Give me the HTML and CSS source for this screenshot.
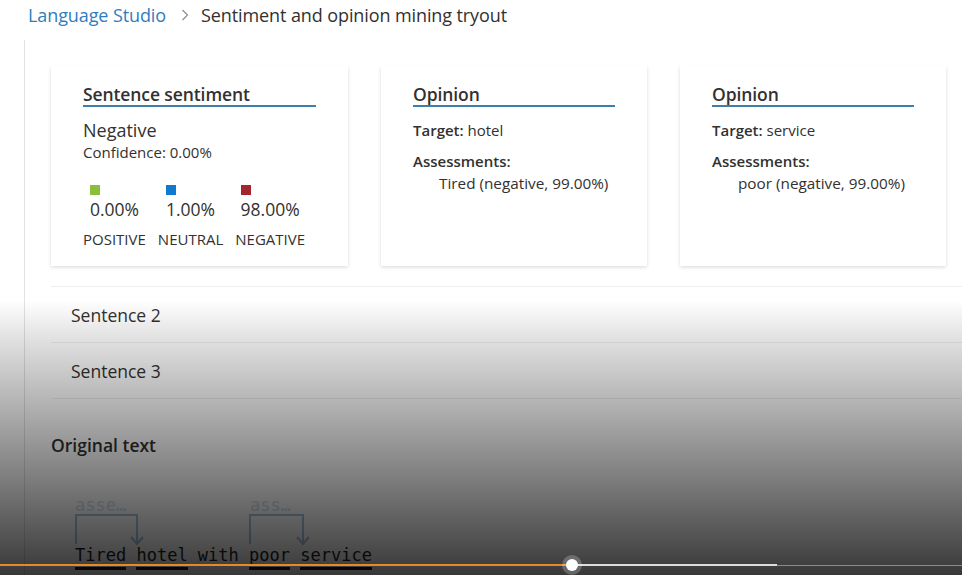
FILE: index.html
```html
<!DOCTYPE html>
<html lang="en">
<head>
<meta charset="utf-8">
<title>Sentiment and opinion mining tryout</title>
<link rel="stylesheet" href="styles.css">
</head>
<body>
<nav class="crumbs">
  <a class="crumb-link">Language Studio</a>
  <svg class="chev" width="8" height="12" viewBox="0 0 8 12"><path d="M1.5 1 L6.5 6 L1.5 11" fill="none" stroke="#8a8886" stroke-width="1.1"/></svg>
  <span class="crumb-current">Sentiment and opinion mining tryout</span>
</nav>

<main class="content">
  <section class="cards">
    <div class="card card-wide">
      <h3 class="card-title">Sentence sentiment</h3>
      <div class="sent-label">Negative</div>
      <div class="confidence">Confidence: 0.00%</div>
      <div class="scores">
        <div class="score">
          <div class="score-top"><span class="swatch pos"></span><span class="pct">0.00%</span></div>
          <span class="lbl">POSITIVE</span>
        </div>
        <div class="score">
          <div class="score-top"><span class="swatch neu"></span><span class="pct">1.00%</span></div>
          <span class="lbl">NEUTRAL</span>
        </div>
        <div class="score">
          <div class="score-top"><span class="swatch neg"></span><span class="pct">98.00%</span></div>
          <span class="lbl">NEGATIVE</span>
        </div>
      </div>
    </div>

    <div class="card">
      <h3 class="card-title">Opinion</h3>
      <div class="target"><b>Target:</b> hotel</div>
      <div class="assess-h">Assessments:</div>
      <div class="assess">Tired (negative, 99.00%)</div>
    </div>

    <div class="card">
      <h3 class="card-title">Opinion</h3>
      <div class="target"><b>Target:</b> service</div>
      <div class="assess-h">Assessments:</div>
      <div class="assess">poor (negative, 99.00%)</div>
    </div>
  </section>

  <div class="rows">
    <div class="row">Sentence 2</div>
    <div class="row">Sentence 3</div>
  </div>

  <h3 class="orig-title">Original text</h3>

  <div class="annot">
    <div class="diagram">
      <span class="tag tag1">asse…</span>
      <span class="tag tag2">ass…</span>
      <svg class="links" width="320" height="60" viewBox="0 0 320 60">
        <g fill="none" stroke="#a9c6e2" stroke-width="2">
          <path d="M1 52 V23 H62 V51"/>
          <path d="M56 45 L62 52 L68 45"/>
          <path d="M175 52 V23 H228 V51"/>
          <path d="M222 45 L228 52 L234 45"/>
        </g>
      </svg>
    </div>
    <div class="sentence"><span class="u">Tired</span> <span class="u">hotel</span> with <span class="u">poor</span> <span class="u">service</span></div>
  </div>
</main>

<div class="shade"></div>
<div class="player">
  <div class="bar-played"></div>
  <div class="knob"></div>
  <div class="bar-buffered"></div>
  <div class="bar-rest"></div>
</div>
</body>
</html>
```

FILE: styles.css
```css
* { box-sizing: border-box; }
html, body { margin: 0; padding: 0; }
body {
  width: 962px;
  height: 575px;
  overflow: hidden;
  background: #ffffff;
  font-family: "Open Sans", "Noto Sans", sans-serif;
  color: #323130;
  position: relative;
}

.crumbs {
  display: flex;
  align-items: center;
  height: 30px;
  padding-left: 28px;
  font-size: 18px;
  letter-spacing: -0.1px;
}
.crumb-link { color: #2f7dbf; }
.chev { margin: 0 12px 0 15px; }
.crumb-current { color: #323130; }

.content {
  margin-left: 24px;
  margin-top: 10px;
  border-left: 1px solid #e4e2e0;
  padding-left: 26px;
  padding-top: 25px;
  min-height: 545px;
}

.cards {
  display: flex;
  gap: 33px;
}
.card {
  width: 266px;
  height: 201px;
  background: #fff;
  padding: 18px 32px 16px;
  box-shadow: 0 1.6px 3.6px rgba(0,0,0,0.14), 0 0.3px 0.9px rgba(0,0,0,0.12);
}
.card-wide { width: 297px; }

.card-title {
  margin: 0;
  font-size: 17.5px;
  line-height: 22px;
  font-weight: 600;
  color: #323130;
  border-bottom: 2px solid #3f7ea8;
  letter-spacing: -0.1px;
}

.sent-label {
  margin-top: 11px;
  font-size: 18px;
  line-height: 24px;
}
.confidence {
  font-size: 15px;
  line-height: 20px;
}

.scores {
  display: flex;
  gap: 12px;
  margin-top: 23px;
}
.score {
  display: flex;
  flex-direction: column;
  align-items: center;
}
.score-top {
  display: flex;
  flex-direction: column;
  align-items: flex-start;
}
.swatch {
  width: 10px;
  height: 10px;
  display: block;
}
.swatch.pos { background: #8cbd3c; }
.swatch.neu { background: #1179d0; }
.swatch.neg { background: #a4262c; }
.pct {
  margin-top: 3px;
  font-size: 17.5px;
  line-height: 22px;
}
.lbl {
  margin-top: 9px;
  font-size: 15px;
  line-height: 20px;
}

.target {
  margin-top: 12px;
  font-size: 15px;
  line-height: 22px;
}
.target b, .assess-h { font-weight: 600; }
.assess-h {
  margin-top: 9px;
  font-size: 15px;
  line-height: 22px;
}
.assess {
  padding-left: 26px;
  font-size: 15.3px;
  line-height: 22px;
}

.rows {
  margin-top: 20px;
  border-top: 1px solid #efeeed;
}
.row {
  height: 56px;
  display: flex;
  align-items: center;
  padding-left: 20px;
  font-size: 17.5px;
  border-bottom: 1px solid #efeeed;
  padding-top: 1px;
}

.orig-title {
  margin: 34px 0 0;
  font-size: 17.5px;
  line-height: 24px;
  font-weight: 600;
}

.annot {
  margin-top: 35px;
  padding-left: 24px;
}
.diagram {
  position: relative;
  height: 53px;
  width: 320px;
}
.tag {
  position: absolute;
  top: 3px;
  font-family: "DejaVu Sans Mono", "Liberation Mono", monospace;
  font-size: 17px;
  line-height: 20px;
  color: #d2dfee;
}
.tag1 { left: 0; }
.tag2 { left: 175px; }
.links { position: absolute; left: 0; top: 0; }

.sentence {
  font-family: "DejaVu Sans Mono", "Liberation Mono", monospace;
  font-size: 17px;
  line-height: 20px;
  color: #201f1e;
  white-space: pre;
}
.u {
  border-bottom: 3px solid #201f1e;
  padding-bottom: 2px;
}

.shade {
  position: absolute;
  left: 0;
  top: 0;
  width: 962px;
  height: 575px;
  pointer-events: none;
  background: linear-gradient(to bottom,
    rgba(0,0,0,0) 0px,
    rgba(0,0,0,0) 300px,
    rgba(0,0,0,0.12) 340px,
    rgba(0,0,0,0.78) 575px);
}

.player {
  position: absolute;
  left: 0;
  top: 564px;
  width: 962px;
  height: 2px;
  display: flex;
  align-items: center;
}
.bar-played { width: 572px; height: 2px; background: #e8882a; }
.bar-buffered { width: 205px; height: 2px; background: #dcdcdc; }
.bar-rest { flex: 1; height: 1px; background: #8a8a8a; }
.knob {
  position: absolute;
  left: 566px;
  top: -5px;
  width: 12px;
  height: 12px;
  border-radius: 50%;
  background: #ffffff;
  box-shadow: 0 0 0 4px rgba(255,255,255,0.22);
}
```
